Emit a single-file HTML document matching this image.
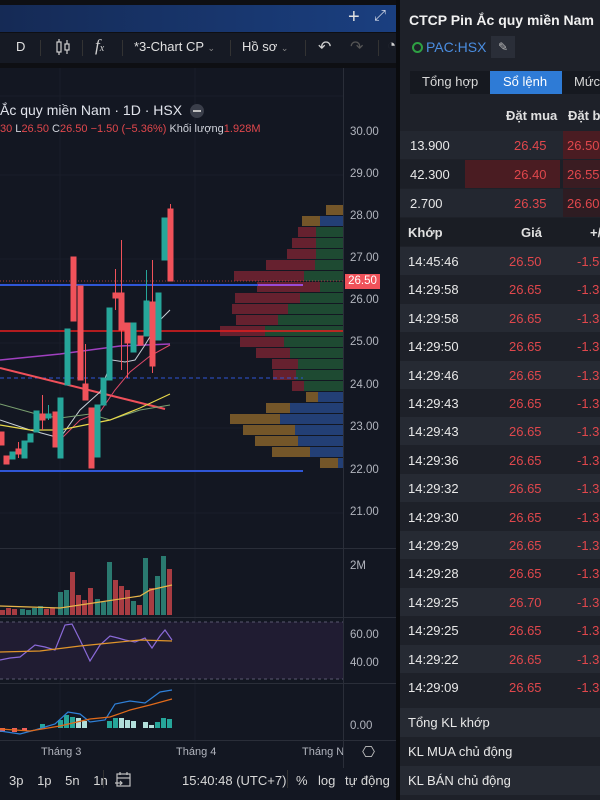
<!DOCTYPE html>
<html><head><meta charset="utf-8"><style>
*{margin:0;padding:0;box-sizing:border-box}
body{width:600px;height:800px;overflow:hidden;background:#0e0f13;font-family:"Liberation Sans","Noto Sans CJK SC",sans-serif;position:relative;color:#d1d4dc}
.a{position:absolute;white-space:nowrap}
#rp{position:absolute;left:400px;top:0;width:200px;height:800px;background:#1e2129}
.t{font-size:13px;color:#e8e8e8}
.r{color:#e0474c}
.row{position:absolute;left:0;width:200px;height:28px}
.pl{position:absolute;left:350px;font-size:11.5px;color:#b2b5be}
</style></head><body>
<!-- top bar -->
<div class="a" style="left:0;top:5px;width:396px;height:27px;background:linear-gradient(90deg,#152a55,#1a3f80)"></div>
<div class="a" style="left:348px;top:6px;font-size:20px;color:#e0e0e0">+</div>
<div class="a" style="left:374px;top:7px;font-size:15px;color:#cfd6e6">⤢</div>
<!-- toolbar -->
<div class="a" style="left:0;top:33px;width:396px;height:30px;background:#161a24"></div>
<div class="a" style="left:16px;top:39px;font-size:13px;color:#e0e0e0">D</div>
<svg class="a" style="left:55px;top:38px" width="16" height="18" viewBox="0 0 16 18" fill="none" stroke="#d0d0d0" stroke-width="1.2"><rect x="2" y="4" width="4" height="10"/><line x1="4" y1="1" x2="4" y2="4"/><line x1="4" y1="14" x2="4" y2="17"/><rect x="10" y="6" width="4" height="6"/><line x1="12" y1="2" x2="12" y2="6"/><line x1="12" y1="12" x2="12" y2="16"/></svg>
<div class="a" style="left:95px;top:36px;font-size:17px;font-style:italic;font-family:'Liberation Serif',serif;color:#d0d0d0">f<span style="font-size:10px">x</span></div>
<div class="a" style="left:134px;top:39px;font-size:13px;color:#e0e0e0">*3-Chart CP <span style="font-size:9px;color:#888">⌄</span></div>
<div class="a" style="left:242px;top:39px;font-size:13px;color:#e0e0e0">Hồ sơ <span style="font-size:9px;color:#888">⌄</span></div>
<div class="a" style="left:318px;top:37px;font-size:16px;color:#d0d0d0">↶</div>
<div class="a" style="left:350px;top:37px;font-size:16px;color:#555">↷</div>
<div class="a" style="left:387px;top:37px;font-size:15px;color:#d0d0d0">◔</div>
<div class="a" style="left:40px;top:40px;width:1px;height:16px;background:#333"></div>
<div class="a" style="left:82px;top:40px;width:1px;height:16px;background:#333"></div>
<div class="a" style="left:122px;top:40px;width:1px;height:16px;background:#333"></div>
<div class="a" style="left:230px;top:40px;width:1px;height:16px;background:#333"></div>
<div class="a" style="left:305px;top:40px;width:1px;height:16px;background:#333"></div>
<div class="a" style="left:378px;top:40px;width:1px;height:16px;background:#333"></div>
<!-- chart area -->
<svg class="a" style="left:0;top:68px" width="396" height="700" viewBox="0 68 396 700">
<rect x="0" y="68" width="396" height="700" fill="#131722"/>
<g stroke="#1a1e29" stroke-width="1">
<line x1="0" y1="96" x2="343" y2="96"/>
<line x1="60" y1="68" x2="60" y2="740"/><line x1="195" y1="68" x2="195" y2="740"/>
<line x1="0" y1="175" x2="343" y2="175"/><line x1="0" y1="259" x2="343" y2="259"/><line x1="0" y1="343" x2="343" y2="343"/><line x1="0" y1="428" x2="343" y2="428"/><line x1="0" y1="513" x2="343" y2="513"/>
</g>
<line x1="343.5" y1="68" x2="343.5" y2="768" stroke="#2a2e39"/>
<line x1="0" y1="548.5" x2="396" y2="548.5" stroke="#2a2e39"/>
<line x1="0" y1="617.5" x2="396" y2="617.5" stroke="#2a2e39"/>
<line x1="0" y1="683.5" x2="396" y2="683.5" stroke="#2a2e39"/>
<line x1="0" y1="740.5" x2="396" y2="740.5" stroke="#2a2e39"/>
<g opacity="0.95">
<rect x="326" y="205" width="17" height="10" fill="#7a5a2a"/>
<rect x="302" y="216" width="18" height="10" fill="#7a5a2a"/><rect x="320" y="216" width="23" height="10" fill="#24427a"/>
<rect x="298" y="227" width="18" height="10" fill="#6b2230"/><rect x="316" y="227" width="27" height="10" fill="#1f4d33"/>
<rect x="292" y="238" width="24" height="10" fill="#6b2230"/><rect x="316" y="238" width="27" height="10" fill="#1f4d33"/>
<rect x="287" y="249" width="29" height="10" fill="#6b2230"/><rect x="316" y="249" width="27" height="10" fill="#1f4d33"/>
<rect x="266" y="260" width="49" height="10" fill="#6b2230"/><rect x="315" y="260" width="28" height="10" fill="#1f4d33"/>
<rect x="234" y="271" width="70" height="10" fill="#6b2230"/><rect x="304" y="271" width="39" height="10" fill="#1f4d33"/>
<rect x="257" y="282" width="63" height="10" fill="#6b2230"/><rect x="320" y="282" width="23" height="10" fill="#1f4d33"/>
<rect x="235" y="293" width="65" height="10" fill="#6b2230"/><rect x="300" y="293" width="43" height="10" fill="#1f4d33"/>
<rect x="232" y="304" width="56" height="10" fill="#6b2230"/><rect x="288" y="304" width="55" height="10" fill="#1f4d33"/>
<rect x="236" y="315" width="42" height="10" fill="#6b2230"/><rect x="278" y="315" width="65" height="10" fill="#1f4d33"/>
<rect x="220" y="326" width="45" height="10" fill="#6b2230"/><rect x="265" y="326" width="78" height="10" fill="#1f4d33"/>
<rect x="240" y="337" width="44" height="10" fill="#6b2230"/><rect x="284" y="337" width="59" height="10" fill="#1f4d33"/>
<rect x="256" y="348" width="34" height="10" fill="#6b2230"/><rect x="290" y="348" width="53" height="10" fill="#1f4d33"/>
<rect x="272" y="359" width="26" height="10" fill="#6b2230"/><rect x="298" y="359" width="45" height="10" fill="#1f4d33"/>
<rect x="273" y="370" width="23" height="10" fill="#6b2230"/><rect x="296" y="370" width="47" height="10" fill="#1f4d33"/>
<rect x="292" y="381" width="12" height="10" fill="#6b2230"/><rect x="304" y="381" width="39" height="10" fill="#1f4d33"/>
<rect x="306" y="392" width="12" height="10" fill="#7a5a2a"/><rect x="318" y="392" width="25" height="10" fill="#24427a"/>
<rect x="266" y="403" width="24" height="10" fill="#7a5a2a"/><rect x="290" y="403" width="53" height="10" fill="#24427a"/>
<rect x="230" y="414" width="50" height="10" fill="#7a5a2a"/><rect x="280" y="414" width="63" height="10" fill="#24427a"/>
<rect x="243" y="425" width="52" height="10" fill="#7a5a2a"/><rect x="295" y="425" width="48" height="10" fill="#24427a"/>
<rect x="255" y="436" width="43" height="10" fill="#7a5a2a"/><rect x="298" y="436" width="45" height="10" fill="#24427a"/>
<rect x="272" y="447" width="38" height="10" fill="#7a5a2a"/><rect x="310" y="447" width="33" height="10" fill="#24427a"/>
<rect x="320" y="458" width="18" height="10" fill="#7a5a2a"/><rect x="338" y="458" width="5" height="10" fill="#24427a"/>
</g>
<line x1="0" y1="281" x2="343" y2="281" stroke="#e0474c" stroke-dasharray="1 2" opacity=".7"/>
<line x1="0" y1="285" x2="258" y2="285" stroke="#2f56d6" stroke-width="2"/>
<line x1="258" y1="285" x2="303" y2="285" stroke="#9a4ad6" stroke-width="2"/>
<line x1="0" y1="331" x2="343" y2="331" stroke="#e81e1e" stroke-width="1.5"/>
<line x1="0" y1="378" x2="303" y2="378" stroke="#2f56d6" stroke-dasharray="4 3"/>
<line x1="0" y1="471" x2="303" y2="471" stroke="#2f56d6" stroke-width="2"/>
<line x1="0" y1="368" x2="165" y2="409" stroke="#f0505a" stroke-width="2"/>
<polyline points="0,360 60,354 120,346 170,344" fill="none" stroke="#a040c0" stroke-width="1.5"/>
<polyline points="0,420 30,430 60,438 80,410 100,392 112,360 125,362 135,360 145,345 160,320 170,310" fill="none" stroke="#c8d0d8" stroke-width="1"/>
<polyline points="60,440 80,420 100,412 115,390 130,372 150,356 170,345" fill="none" stroke="#e04a6a" stroke-width="1"/>
<polyline points="0,404 40,415 60,418 90,414 110,420 140,410 170,405" fill="none" stroke="#7aa070" stroke-width="1"/>
<polyline points="0,425 30,430 60,430 90,424 110,420 140,408 170,394" fill="none" stroke="#e8d84a" stroke-width="1.2"/>
<g stroke-width="1">
<g fill="#f0525a" stroke="#f0525a">
<rect x="-1" y="432" width="5" height="13"/><rect x="4" y="456" width="5" height="8"/><rect x="16" y="449" width="5" height="5"/><line x1="18.5" y1="442" x2="18.5" y2="458"/>
<rect x="40" y="414" width="5" height="6"/><line x1="42.5" y1="395" x2="42.5" y2="430"/>
<rect x="53" y="412" width="5" height="35"/><rect x="71" y="257" width="5" height="64"/><rect x="78" y="286" width="5" height="94"/>
<line x1="85.5" y1="344" x2="85.5" y2="400"/><rect x="83" y="384" width="5" height="16"/>
<rect x="89" y="408" width="5" height="60"/>
<rect x="113" y="293" width="5" height="5"/><line x1="115.5" y1="269" x2="115.5" y2="310"/>
<rect x="119" y="293" width="5" height="37"/><line x1="121.5" y1="240" x2="121.5" y2="370"/>
<rect x="125" y="323" width="5" height="20"/><line x1="127.5" y1="323" x2="127.5" y2="378"/>
<rect x="138" y="336" width="5" height="9"/>
<rect x="150" y="302" width="5" height="64"/><line x1="152.5" y1="260" x2="152.5" y2="373"/>
<rect x="168" y="209" width="5" height="72"/><line x1="170.5" y1="204" x2="170.5" y2="209"/>
</g>
<g fill="#26a69a" stroke="#26a69a">
<rect x="10" y="452" width="5" height="7"/><rect x="22" y="441" width="5" height="17"/><rect x="28" y="434" width="5" height="8"/><rect x="34" y="411" width="5" height="21"/>
<rect x="46" y="414" width="5" height="4"/><line x1="48.5" y1="405" x2="48.5" y2="420"/>
<rect x="58" y="398" width="5" height="60"/><rect x="65" y="329" width="5" height="56"/>
<rect x="95" y="405" width="5" height="52"/><rect x="101" y="378" width="5" height="27"/><rect x="107" y="308" width="5" height="72"/>
<rect x="131" y="323" width="5" height="29"/><rect x="144" y="301" width="5" height="35"/><line x1="146.5" y1="270" x2="146.5" y2="301"/>
<rect x="156" y="293" width="5" height="47"/><rect x="162" y="218" width="5" height="42"/>
</g></g>
<g fill="#2a7a70">
<rect x="20" y="609" width="5" height="6"/><rect x="26" y="610" width="5" height="5"/><rect x="32" y="608" width="5" height="7"/><rect x="38" y="606" width="5" height="9"/>
<rect x="58" y="592" width="5" height="23"/><rect x="64" y="590" width="5" height="25"/><rect x="95" y="599" width="5" height="16"/><rect x="101" y="602" width="5" height="13"/><rect x="107" y="562" width="5" height="53"/><rect x="131" y="601" width="5" height="14"/><rect x="143" y="558" width="5" height="57"/><rect x="155" y="576" width="5" height="39"/><rect x="161" y="556" width="5" height="59"/>
</g>
<g fill="#a83c42">
<rect x="0" y="610" width="5" height="5"/><rect x="6" y="608" width="5" height="7"/><rect x="12" y="609" width="5" height="6"/><rect x="44" y="609" width="5" height="6"/><rect x="50" y="608" width="5" height="7"/>
<rect x="70" y="572" width="5" height="43"/><rect x="76" y="595" width="5" height="20"/><rect x="82" y="600" width="5" height="15"/><rect x="88" y="588" width="5" height="27"/><rect x="113" y="580" width="5" height="35"/><rect x="119" y="586" width="5" height="29"/><rect x="125" y="590" width="5" height="25"/><rect x="137" y="605" width="5" height="10"/><rect x="149" y="588" width="5" height="27"/><rect x="167" y="569" width="5" height="46"/>
</g>
<polyline points="0,606 60,608 100,602 140,596 150,590 172,585" fill="none" stroke="#e8b64a" stroke-width="1.2"/>
<rect x="0" y="622" width="343" height="57" fill="#201c32"/>
<line x1="0" y1="622" x2="343" y2="622" stroke="#5a5870" stroke-dasharray="3 3"/>
<line x1="0" y1="679" x2="343" y2="679" stroke="#5a5870" stroke-dasharray="3 3"/>
<polyline points="0,660 10,658 20,657 35,645 45,647 55,650 65,625 72,624 80,640 90,661 100,645 110,636 118,638 125,640 135,642 145,638 152,648 160,636 165,630 172,640" fill="none" stroke="#8a6ad8" stroke-width="1.2"/>
<polyline points="0,652 40,651 80,646 110,643 140,640 172,641" fill="none" stroke="#e0952a" stroke-width="1.2"/>
<g fill="#26a69a"><rect x="40" y="724" width="5" height="4"/><rect x="58" y="720" width="5" height="8"/><rect x="64" y="715" width="5" height="13"/><rect x="70" y="717" width="5" height="11"/><rect x="107" y="721" width="5" height="7"/><rect x="113" y="718" width="5" height="10"/><rect x="155" y="722" width="5" height="6"/><rect x="161" y="718" width="5" height="10"/><rect x="167" y="719" width="5" height="9"/></g>
<g fill="#b2dfdb"><rect x="76" y="718" width="5" height="10"/><rect x="82" y="721" width="5" height="7"/><rect x="119" y="718" width="5" height="10"/><rect x="125" y="720" width="5" height="8"/><rect x="131" y="721" width="5" height="7"/><rect x="143" y="722" width="5" height="6"/><rect x="149" y="725" width="5" height="3"/></g>
<g fill="#f0605a"><rect x="0" y="728" width="5" height="4"/><rect x="12" y="728" width="5" height="4"/><rect x="22" y="728" width="5" height="3"/></g>
<polyline points="0,731 20,734 35,730 55,724 68,712 80,714 90,722 105,720 115,704 130,701 145,703 160,692 172,690" fill="none" stroke="#2f80d8" stroke-width="1.2"/>
<polyline points="0,729 30,731 60,726 90,719 110,717 130,710 150,705 172,699" fill="none" stroke="#e06a1a" stroke-width="1.2"/>
</svg>
<div class="a" style="left:0;top:102px;font-size:14px;color:#e0e3eb">Ắc quy miền Nam · 1D · HSX</div>
<div class="a" style="left:190px;top:104px;width:14px;height:14px;border-radius:7px;background:#3a3e4a"><div style="margin:6px 3px;width:8px;height:2px;background:#c0c0c0"></div></div>
<div class="a" style="left:0;top:123px;font-size:11px;color:#d0d3db"><span class="r">30</span> L<span class="r">26.50</span> C<span class="r">26.50</span> <span class="r">−1.50 (−5.36%)</span> Khối lượng<span class="r">1.928M</span></div>
<div class="pl" style="top:126px">30.00</div>
<div class="pl" style="top:168px">29.00</div>
<div class="pl" style="top:210px">28.00</div>
<div class="pl" style="top:252px">27.00</div>
<div class="a" style="left:345px;top:274px;width:35px;height:15px;background:#f0525a;color:#fff;font-size:11.5px;text-align:center;line-height:15px">26.50</div>
<div class="pl" style="top:294px">26.00</div>
<div class="pl" style="top:336px">25.00</div>
<div class="pl" style="top:379px">24.00</div>
<div class="pl" style="top:421px">23.00</div>
<div class="pl" style="top:464px">22.00</div>
<div class="pl" style="top:506px">21.00</div>
<div class="pl" style="top:560px">2M</div>
<div class="pl" style="top:629px">60.00</div>
<div class="pl" style="top:657px">40.00</div>
<div class="pl" style="top:720px">0.00</div>
<div class="a" style="left:41px;top:746px;font-size:11px;color:#b2b5be">Tháng 3</div>
<div class="a" style="left:176px;top:746px;font-size:11px;color:#b2b5be">Tháng 4</div>
<div class="a" style="left:302px;top:746px;width:41px;overflow:hidden;font-size:11px;color:#b2b5be">Tháng Năm</div>
<div class="a" style="left:362px;top:743px;font-size:15px;color:#c0c0c0">⎔</div>
<div class="a" style="left:0;top:768px;width:396px;height:32px;background:#131722"></div>
<div class="a" style="left:9px;top:773px;font-size:13px;color:#d8d8d8;word-spacing:10px">3p 1p 5n 1n</div>
<div class="a" style="left:103px;top:770px;width:1px;height:18px;background:#333"></div>
<svg class="a" style="left:114px;top:771px" width="18" height="18" viewBox="0 0 18 18" fill="none" stroke="#c0c0c0" stroke-width="1.2"><rect x="3" y="3" width="13" height="12"/><line x1="3" y1="7" x2="16" y2="7"/><line x1="6" y1="1" x2="6" y2="4"/><line x1="13" y1="1" x2="13" y2="4"/><path d="M1 12h7M6 10l2 2-2 2"/></svg>
<div class="a" style="left:182px;top:773px;font-size:13px;color:#d8d8d8">15:40:48 (UTC+7)</div>
<div class="a" style="left:287px;top:770px;width:1px;height:18px;background:#333"></div>
<div class="a" style="left:296px;top:773px;font-size:13px;color:#d8d8d8">%</div>
<div class="a" style="left:318px;top:773px;font-size:13px;color:#d8d8d8">log</div>
<div class="a" style="left:345px;top:773px;font-size:13px;color:#d8d8d8">tự động</div>
<div id="rp">
<div class="a" style="left:9px;top:12px;font-size:14px;font-weight:bold;color:#f0f0f0">CTCP Pin Ắc quy miền Nam</div>
<div class="a" style="left:12px;top:42px;width:11px;height:11px;border:2px solid #2ea043;border-radius:6px"></div>
<div class="a" style="left:26px;top:39px;font-size:14px;color:#4a8de0">PAC:HSX</div>
<div class="a" style="left:91px;top:36px;width:24px;height:22px;background:#2a2e38;color:#bbb;font-size:12px;text-align:center;line-height:22px">✎</div>
<div class="a" style="left:10px;top:71px;width:190px;height:23px;background:#161920"></div>
<div class="a" style="left:22px;top:74px;font-size:13px;color:#d8d8d8">Tổng hợp</div>
<div class="a" style="left:90px;top:71px;width:72px;height:23px;background:#2e7bd6"></div>
<div class="a" style="left:103px;top:74px;font-size:13px;color:#fff">Sổ lệnh</div>
<div class="a" style="left:174px;top:74px;font-size:13px;color:#d8d8d8">Mức</div>
<div class="a" style="left:106px;top:108px;font-size:13px;font-weight:bold;color:#e0e0e0">Đặt mua</div>
<div class="a" style="left:168px;top:108px;font-size:13px;font-weight:bold;color:#e0e0e0">Đặt ba</div>
<div class="row" style="top:131px;background:#232730"></div>
<div class="row" style="top:160px;background:#1c1f27"></div>
<div class="row" style="top:189px;background:#232730"></div>
<div class="a" style="left:65px;top:160px;width:95px;height:28px;background:#4a1c22"></div>
<div class="a" style="left:163px;top:131px;width:37px;height:28px;background:#4a1c22"></div>
<div class="a" style="left:163px;top:160px;width:37px;height:28px;background:#3a1c22"></div>
<div class="a" style="left:163px;top:189px;width:37px;height:28px;background:#2e1c22"></div>
<div class="a t" style="left:10px;top:138px">13.900</div><div class="a t" style="left:114px;top:138px;color:#e0474c">26.45</div><div class="a t" style="left:167px;top:138px;color:#e0474c">26.50</div>
<div class="a t" style="left:10px;top:167px">42.300</div><div class="a t" style="left:114px;top:167px;color:#e0474c">26.40</div><div class="a t" style="left:167px;top:167px;color:#e0474c">26.55</div>
<div class="a t" style="left:10px;top:196px">2.700</div><div class="a t" style="left:114px;top:196px;color:#e0474c">26.35</div><div class="a t" style="left:167px;top:196px;color:#e0474c">26.60</div>
<div class="row" style="top:218px;background:#1a1d24"></div>
<div class="a" style="left:8px;top:225px;font-size:13px;font-weight:bold;color:#e0e0e0">Khớp</div>
<div class="a" style="left:121px;top:225px;font-size:13px;font-weight:bold;color:#e0e0e0">Giá</div>
<div class="a" style="left:190px;top:225px;font-size:13px;font-weight:bold;color:#e0e0e0">+/</div>
<div id="trades"></div>
<div class="row" style="top:708px;height:29px;background:#262a33"></div>
<div class="row" style="top:737px;height:29px;background:#1e2129"></div>
<div class="row" style="top:766px;height:29px;background:#262a33"></div>
<div class="a t" style="left:8px;top:715px">Tổng KL khớp</div>
<div class="a t" style="left:8px;top:744px">KL MUA chủ động</div>
<div class="a t" style="left:8px;top:773px">KL BÁN chủ động</div>
</div>
<div class="a" style="left:396px;top:0;width:4px;height:800px;background:#0a0b0e"></div>
<script>
var d=[["14:45:46","26.50","-1.50"],["14:29:58","26.65","-1.35"],["14:29:58","26.65","-1.35"],["14:29:50","26.65","-1.35"],["14:29:46","26.65","-1.35"],["14:29:43","26.65","-1.35"],["14:29:43","26.65","-1.35"],["14:29:36","26.65","-1.35"],["14:29:32","26.65","-1.35"],["14:29:30","26.65","-1.35"],["14:29:29","26.65","-1.35"],["14:29:28","26.65","-1.35"],["14:29:25","26.70","-1.30"],["14:29:25","26.65","-1.35"],["14:29:22","26.65","-1.35"],["14:29:09","26.65","-1.35"]];
var h="";d.forEach(function(r,i){var y=247+i*28.4;h+='<div class="row" style="top:'+y+'px;background:'+(i%2?'#1e2129':'#262a33')+'"></div><div class="a t" style="left:8px;top:'+(y+7)+'px">'+r[0]+'</div><div class="a t" style="left:109px;top:'+(y+7)+'px;color:#e0474c">'+r[1]+'</div><div class="a t" style="left:177px;top:'+(y+7)+'px;color:#e0474c">'+r[2]+'</div>';});
document.getElementById("trades").innerHTML=h;
</script>
</body></html>
